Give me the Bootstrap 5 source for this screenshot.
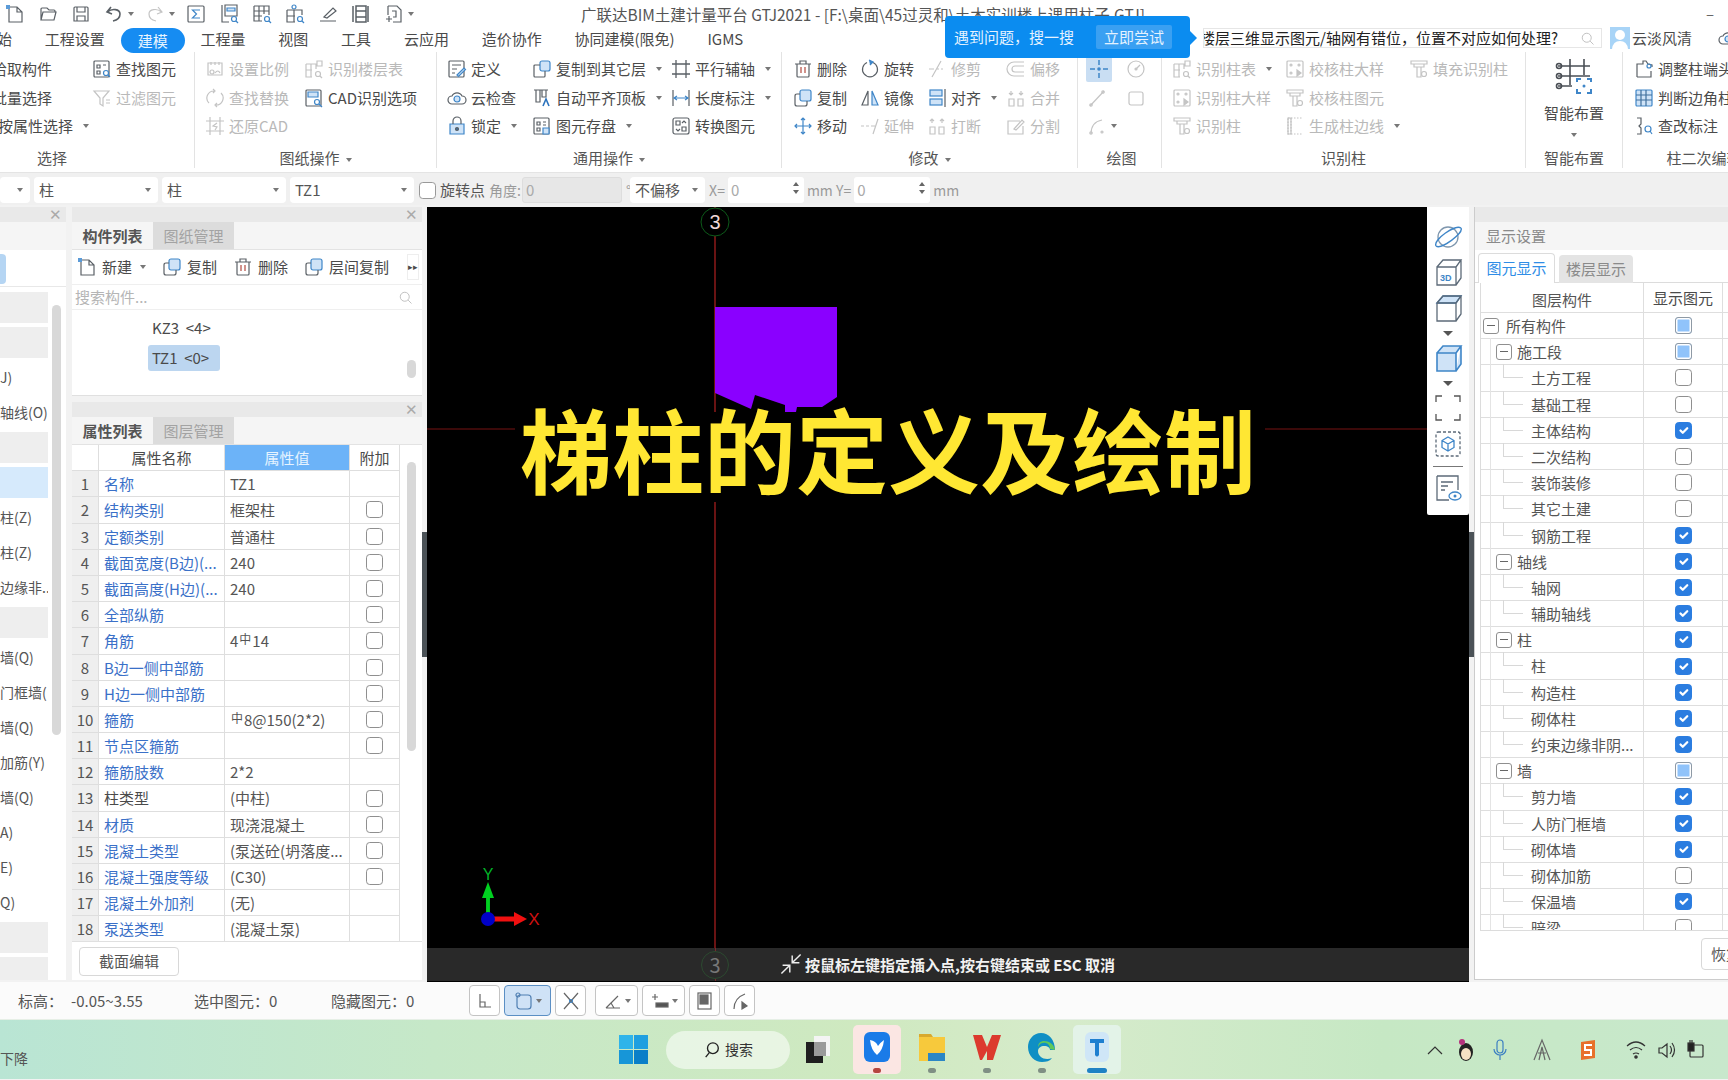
<!DOCTYPE html>
<html lang="zh">
<head>
  <meta charset="UTF-8">
  <title>广联达BIM土建计量平台 GTJ2021</title>
  <link href="https://cdn.jsdelivr.net/npm/bootstrap@5.3.0/dist/css/bootstrap.min.css" rel="stylesheet">
  <script src="https://cdn.jsdelivr.net/npm/bootstrap@5.3.0/dist/js/bootstrap.bundle.min.js"></script>
  <style>
    html, body { height: 1080px; overflow: hidden; }
    body { background: #f2f2f2; color: #4a4a4a; font: 15px/1.2 "Noto Sans CJK SC", "Noto Sans", sans-serif; }
    .app { width: 1728px; height: 1080px; overflow: hidden; position: relative; }
    .ic { width: 20px; height: 20px; flex: none; fill: none; stroke: currentColor; stroke-width: 1.2; color: #5a6066; }
    .ac { fill: var(--ac, #cfe3f7); stroke: var(--acs, #3f86c8); }
    .off { --ac: #f4f4f4; --acs: #cfcfcf; color: #b9b9b9; }
    .off .ic { color: #c4c4c4; }
    .cr { display: inline-block; width: 0; height: 0; border: 3px solid transparent; border-top: 4px solid #777; border-bottom: 0; flex: none; }

    /* title row */
    .qat { height: 28px; background: #fff; padding-left: 5px; }
    .qat .ic { margin-right: 13px; }
    .qat .cr { margin: 0 11px 0 -9px; }
    .app-title { margin-left: 156px; color: #555; white-space: nowrap; font-size: 15.5px; }
    .win-min { margin-left: auto; margin-right: 14px; color: #666; }
    .hint-pop { position: absolute; left: 945px; top: 16px; width: 245px; height: 42px; background: #0b8cf0; color: #e4f2ff; border-radius: 4px; padding: 0 18px 0 9px; z-index: 5; }
    .hint-pop::after { content: ""; position: absolute; right: -7px; top: 15px; border: 7px solid transparent; border-left-color: #0b8cf0; border-right: 0; }
    .hint-try { background: #3aa0f2; padding: 3px 8px; border-radius: 2px; }

    /* ribbon tabs */
    .tab-row { height: 24px; background: #fff; position: relative; }
    .rb-tabs { margin-left: -3px; flex-wrap: nowrap; gap: 32.8px; }
    .rb-tabs .nav-link { padding: 0; color: #4a4a4a; line-height: 22px; white-space: nowrap; border-radius: 13px; }
    .rb-tabs .nav-link.active { background: #168cf2; color: #e8f4ff; padding: 0 17px; margin: 0 -17px; height: 25px; line-height: 25px; }
    .ask-box { position: absolute; left: 1203px; top: 0; width: 399px; height: 20px; background: #fff; border: 1px solid #e6e6e6; color: #222; overflow: hidden; white-space: nowrap; text-indent: -4px; line-height: 18px; }
    .ask-icon { position: absolute; right: 6px; top: 2px; width: 15px; height: 15px; color: #bbb; }
    .user-box { position: absolute; left: 1610px; top: -2px; height: 24px; white-space: nowrap; gap: 2px; overflow: hidden; width: 118px; }
    .avatar { width: 20px; height: 22px; background: #a8d4f7; flex: none; }

    /* ribbon */
    .ribbon { height: 121px; background: #fff; border-bottom: 1px solid #e4e4e4; overflow: hidden; }
    .rb-group { flex: none; border-right: 1px solid #e3e3e3; height: 116px; }
    .rb-body { height: 85px; padding-top: 3px; }
    .rb-label { height: 31px; padding-top: 7px; line-height: 28px; text-align: center; color: #555; white-space: nowrap; }
    .rb-label .cr { margin-left: 6px; vertical-align: middle; }
    .rb-col { flex: none; }
    .rb-item { height: 28.5px; display: flex; align-items: center; gap: 4px; white-space: nowrap; }
    .rb-item .cr { margin-left: 6px; }
    .g1 { width: 195px; } .g1 .rb-body { margin-left: -8px; }
    .g1 .rb-label { width: 104px; }
    .g1 .rb-shift { margin-left: 6px; }
    .g2 { width: 242px; } .g2 .rb-body { padding-left: 10px; }
    .g3 { width: 345px; } .g3 .rb-body { padding-left: 10px; }
    .g4 { width: 296px; } .g4 .rb-body { padding-left: 11px; }
    .g5 { width: 84px; }  .g5 .rb-body { padding-left: 9px; }
    .g5 .rb-label { padding-left: 4px; }
    .g6 { width: 364px; } .g6 .rb-body { padding-left: 10px; }
    .g7 { width: 97px; }
    .g8 { width: 162px; border-right: 0; } .g8 .rb-body { padding-left: 11px; }
    .cw-39 { width: 39px; } .cw-67 { width: 67px; } .cw-79 { width: 79px; } .cw-85 { width: 85px; }
    .cw-100 { width: 100px; } .cw-99 { width: 99px; } .cw-113 { width: 113px; } .cw-124 { width: 124px; } .cw-139 { width: 139px; }
    .draw-on { width: 26px; height: 26px; margin-left: -1px; background: #c9def3; border-radius: 2px; display: flex; align-items: center; justify-content: center; }
    .big-tool { text-align: center; padding-top: 5px; }
    .big-tool svg { width: 40px; height: 42px; fill: none; stroke: #4a4f55; stroke-width: 1.6; display: block; margin: 0 auto 5px; }

    /* attribute bar */
    .attr-bar { height: 32px; padding-top: 2px; background: #f0f0f0; gap: 4px; color: #555; white-space: nowrap; }
    .sel-box { height: 26px; background: #fff; border-radius: 4px; padding: 0 7px 0 5px; display: flex; align-items: center; justify-content: space-between; flex: none; }
    .sel-first { width: 30px; justify-content: flex-end; }
    .sel-wide { width: 124px; }
    .sel-off { width: 75px; }
    .attr-check { width: 17px; height: 17px; margin: 0 0 0 1px; border-radius: 3px; border-color: #999; flex: none; }
    .attr-dim { color: #9a9a9a; font-size: 14px; }
    .ang-lbl { margin-right: -3px; }
    .deg-mark { margin-right: -5px; }
    .attr-tail { gap: 3px; }
    .angle-box { width: 100px; height: 26px; background: #e7e7e7; border: 1px solid #ddd; color: #aaa; border-radius: 3px; padding: 0 3px; line-height: 24px; }
    .num-box { width: 76px; height: 26px; background: #fff; border-radius: 3px; padding: 0 3px; color: #aaa; line-height: 26px; position: relative; }
    .spin { position: absolute; right: 5px; top: 5px; display: flex; flex-direction: column; gap: 4px; }
    .spin i { display: block; border: 3px solid transparent; border-bottom: 4px solid #666; border-top: 0; }
    .spin i + i { border-top: 4px solid #666; border-bottom: 0; }

    /* main area */
    .main-area { height: 777px; padding-top: 2px; }
    .side-pane { height: 773px; background: #fff; flex: none; }
    .pane-strip { height: 15px; background: #e9e9e9; position: relative; flex: none; }
    .pane-x { position: absolute; right: 4px; top: 0; font-size: 15px; line-height: 14px; color: #aaa; }
    .nav-pane { width: 66px; margin-right: 6px; position: relative; overflow: hidden; }
    .nav-head { height: 28px; background: #f5f5f5; flex: none; }
    .nav-sel { width: 6px; height: 30px; margin-top: 4px; background: #b5d5f3; border-radius: 0 4px 4px 0; flex: none; }
    .nav-rule { border-top: 1px solid #e8e8e8; margin: 2px 0 5px; flex: none; }
    #nav-rows { flex: none; }
    .nav-row { width: 48px; height: 31px; margin-bottom: 4px; line-height: 31px; overflow: hidden; white-space: nowrap; color: #555; font-size: 14px; }
    .nav-grey { background: #eeeeee; }
    .nav-blue { background: #d6eafc; }
    .nav-thumb { position: absolute; left: 52px; top: 98px; width: 9px; height: 430px; background: #d8d8d8; border-radius: 5px; }

    .comp-pane { width: 350px; }
    .comp-list { height: 189px; border-bottom: 1px solid #e0e0e0; position: relative; }
    .gap-strip { height: 6px; background: #f2f2f2; }
    .tab-strip { height: 28px; background: #f5f5f5; border-bottom: 1px solid #e3e3e3; }
    .tab-on { width: 81px; text-align: center; line-height: 27px; font-weight: 700; color: #555; }
    .tab-dim { width: 81px; text-align: center; line-height: 27px; background: #dcdcdc; color: #a3a3a3; }
    .comp-tools { height: 35px; padding-left: 5px; border-bottom: 1px solid #efefef; position: relative; white-space: nowrap; }
    .comp-tool { display: flex; align-items: center; gap: 5px; }
    .comp-more { position: absolute; right: 3px; top: 4px; width: 12px; height: 26px; border: 1px solid #eee; font-size: 9px; line-height: 24px; text-align: center; }
    .comp-search { height: 25px; padding: 0 3px; border-bottom: 1px solid #efefef; color: #b5b5b5; }
    .comp-search svg { width: 15px; height: 15px; color: #bbb; margin-right: 6px; }
    .comp-item { position: absolute; left: 76px; padding: 0 4px; height: 26px; line-height: 26px; white-space: pre; }
    .comp-item-a { top: 108px; }
    .comp-item-b { top: 138px; width: 72px; background: #bcd6f0; border-radius: 3px; }
    .list-thumb { position: absolute; left: 335px; top: 153px; width: 9px; height: 18px; background: #d8d8d8; border-radius: 5px; }

    .prop-wrap { height: 497px; overflow: hidden; position: relative; border-bottom: 1px solid #e0e0e0; }
    .prop-row { display: flex; height: 26.2px; line-height: 25px; }
    .prop-row > div { border-right: 1px solid #dedede; border-bottom: 1px solid #dedede; overflow: hidden; white-space: nowrap; }
    .p-no { width: 27px; background: #efefef; text-align: center; color: #555; flex: none; }
    .p-name { width: 126px; padding-left: 5px; color: #3a70c8; flex: none; text-overflow: ellipsis; }
    .p-plain { color: #4a4a4a; }
    .p-val { width: 125px; padding-left: 5px; flex: none; color: #555; }
    .p-add { width: 50px; flex: none; display: flex; align-items: center; justify-content: center; }
    .p-head .p-no { background: #fff; }
    .p-head .p-name { text-align: center; color: #4a4a4a; padding: 0; }
    .p-head .p-val { text-align: center; background: #6cb3f8; color: #e6f3ff; padding: 0; }
    .chk { width: 17px; height: 17px; margin: 0; border-radius: 3px; border-color: #8f8f8f; flex: none; }
    .chk:checked { background-color: #2b7de0; border-color: #2b7de0; }
    .chk-part { display: block; width: 17px; height: 17px; border: 1px solid #8f9aa5; border-radius: 3px; background: #90c3fa; box-shadow: inset 0 0 0 1.5px #fff; }
    .reb { font-size: 12px; position: relative; top: -3px; margin: 0 1px; }
    .prop-thumb { position: absolute; left: 335px; top: 17px; width: 9px; height: 289px; background: #d8d8d8; border-radius: 5px; }
    .pane-foot { padding: 5px 0 0 7px; }
    .foot-btn { width: 100px; height: 29px; padding: 0; font-size: 15px; color: #555; background: #fff; border: 1px solid #d8d8d8; border-radius: 4px; }

    .handle { width: 5px; height: 775px; flex: none; background: #f2f2f2; position: relative; }
    .handle::after { content: ""; position: absolute; left: 0; top: 325px; width: 5px; height: 125px; background: #4b5257; }

    /* drawing canvas */
    .draw-area { width: 1042px; height: 775px; background: #000; position: relative; flex: none; overflow: hidden; }
    .draw-area > svg { position: absolute; left: 0; top: 0; }
    .big-caption { position: absolute; left: 93px; top: 194px; font-size: 92px; line-height: 1; font-weight: 700; color: #ffe733; white-space: nowrap; -webkit-text-stroke: 7px #000; paint-order: stroke fill; }
    .view-tools { position: absolute; right: 0; top: 0; width: 42px; height: 308px; background: #fff; border-radius: 0 0 2px 2px; padding-top: 15px; color: #5b6b7b; }
    .view-tools svg { display: block; width: 30px; height: 30px; fill: none; stroke: #5c6a78; stroke-width: 1.3; margin: 0 auto; }
    .view-tools .cr { display: block; margin: 8px auto 0; border-width: 5px 5px 0; border-top-color: #555; }
    .view-tools .vt-m5 { margin-top: 5px; }
    .view-tools .vt-m6 { margin-top: 6px; }
    .view-tools .vt-m7 { margin-top: 7px; }
    .vt-rule { border-top: 1px solid #777; margin: 7px 6px 0; }
    .cmd-bar { position: absolute; left: 0; bottom: 1px; width: 100%; height: 33px; background: rgba(42,42,42,.97); color: #f2f2f2; font-weight: 700; line-height: 33px; }
    .cmd-line { position: absolute; left: 288px; top: 0; bottom: 0; width: 1px; background: #7a2a2a; }
    .cmd-ring { position: absolute; left: 274px; top: 3px; width: 28px; height: 28px; border: 1px solid #2c4a30; border-radius: 50%; text-align: center; font-weight: 400; color: #777; font-size: 20px; line-height: 26px; background: #2a2a2a; }
    .cmd-text { position: absolute; left: 378px; top: 0; white-space: nowrap; }
    .cmd-ico { position: absolute; left: 352px; top: 4px; width: 24px; height: 24px; stroke: #eee; fill: none; stroke-width: 1.2; }

    /* right pane */
    .disp-pane { width: 254px; border-left: 1px solid #ccc; overflow: hidden; border-bottom: 1px solid #ccc; }
    .disp-title { height: 28px; background: #f5f5f5; color: #8a8a8a; line-height: 28px; padding-left: 11px; }
    .disp-tabs { height: 33px; padding: 3px 0 0 3px; gap: 4px; border-bottom: 1px solid #dcdcdc; }
    .disp-tab { width: 77px; height: 30px; line-height: 28px; text-align: center; background: #fff; color: #2f8de6; border: 1px solid #dcdcdc; border-bottom: 0; border-radius: 4px 4px 0 0; }
    .disp-tab-b { width: 74px; height: 28px; margin-top: 2px; line-height: 27px; text-align: center; background: #e4e4e4; color: #8a8a8a; border-radius: 4px 4px 0 0; }
    .disp-grid { height: 648px; margin-left: 5px; overflow: hidden; border-bottom: 1px solid #dcdcdc; border-left: 1px solid #dcdcdc; }
    .t-row { display: flex; height: 26.2px; line-height: 25px; border-bottom: 1px solid #dedede; }
    .t-head { height: 30px; line-height: 33px; text-align: center; }
    .t-name { width: 163px; flex: none; border-right: 1px solid #dedede; position: relative; white-space: nowrap; color: #555; }
    .t-show { width: 79px; flex: none; border-right: 1px solid #dedede; display: flex; align-items: center; justify-content: center; }
    .t-l0 { padding-left: 25px; }
    .t-l1 { padding-left: 36px; }
    .t-l2 { padding-left: 50px; }
    .t-btn { position: absolute; top: 5px; width: 16px; height: 16px; border: 1px solid #8f8f8f; border-radius: 3px; background: #fff; }
    .t-btn::after { content: ""; position: absolute; left: 3px; top: 6px; width: 8px; border-top: 1px solid #666; }
    .t-l0 .t-btn { left: 2px; }
    .t-l1 .t-btn { left: 15px; }
    .t-l1::before, .t-l2::before { content: ""; position: absolute; left: 9px; top: -1px; bottom: -1px; border-left: 1px solid #e4e4e4; }
    .t-l2::after { content: ""; position: absolute; left: 22px; top: -1px; height: 14px; width: 20px; border-left: 1px solid #d8d8d8; border-bottom: 1px solid #d8d8d8; }
    .disp-foot { height: 47px; padding: 7px 0 0 226px; }
    .restore-btn { width: 50px; height: 32px; padding: 0 0 0 9px; text-align: left; white-space: nowrap; overflow: hidden; font-size: 15px; color: #555; background: #fff; border: 1px solid #d8d8d8; border-radius: 4px; }

    /* status bar */
    .status-bar { height: 38px; background: #fbfbfb; color: #555; white-space: nowrap; border-bottom: 1px solid #e6efe6; }
    .st-a { width: 176px; margin-left: 18px; }
    .st-b { width: 137px; }
    .st-c { width: 138px; }
    .st-val { margin-left: 8px; }
    .snap { height: 31px; width: 31px; border: 1px solid #c4c4c4; border-radius: 4px; background: #fff; display: flex; align-items: center; justify-content: center; gap: 2px; margin-right: 4px; }
    .snap-w { width: 43px; }
    .snap-on { width: 47px; background: #cfe2f6; border-color: #5b8fc4; }
    .snap svg { width: 20px; height: 20px; fill: none; stroke: #666; stroke-width: 1.2; flex: none; }
    .snap-on svg { stroke: #4f7fb2; }
    .snap-gap { margin-right: 9px; }

    /* taskbar */
    .task-bar { height: 59px; background: linear-gradient(90deg, #b9e5d4 0%, #c6e8c8 25%, #cfe9c0 50%, #d6ebcb 62%, #c6e8c4 80%, #c8e8cc 100%); position: relative; }
    .task-left { width: 619px; height: 100%; padding-top: 30px; color: #555; font-size: 14px; flex: none; overflow: hidden; }
    .win-logo { width: 29px; height: 29px; flex: none; margin-right: 18px; }
    .task-search { width: 124px; height: 38px; border-radius: 19px; background: rgba(255,255,255,.55); gap: 4px; color: #333; font-size: 14px; margin-right: 16px; flex: none; }
    .task-search svg { width: 18px; height: 18px; fill: none; stroke: #222; stroke-width: 1.5; }
    .task-view { width: 24px; height: 27px; margin-right: 23px; flex: none; }
    .tile { width: 48px; height: 49px; margin-right: 7px; border-radius: 5px; flex: none; position: relative; padding-top: 6px; }
    .tile svg { width: 32px; height: 32px; display: block; margin: 0 auto; }
    .tile-pink { background: #fbe6e3; }
    .tile-soft { background: #e3f3e8; }
    .tile-dot { position: absolute; left: 20px; bottom: 1px; width: 8px; height: 5px; border-radius: 3px; background: #7f8f84; }
    .tile-dot-red { background: #b5453f; }
    .tile-dot-blue { left: 14px; width: 20px; background: #1f82c4; }
    .tray { margin-left: 297px; }
    .tray svg { width: 20px; height: 24px; fill: none; stroke: #333; stroke-width: 1.2; flex: none; }
    .tr-a { margin-right: 11px; } .tr-b { margin-right: 14px; } .tr-c { margin-right: 22px; } .tr-d { margin-right: 26px; } .tr-e { margin-right: 28px; } .tr-f { margin-right: 10px; } .tr-g { margin-right: 10px; }
  </style>
</head>
<body>
<!-- shared icons -->
<svg width="0" height="0" class="position-absolute">
  <symbol id="i-new" viewBox="0 0 20 20"><path d="M4 3h8l5 5v10H4z M12 3v5h5"/><rect x="1" y="1" width="4" height="4" fill="#5b9bd8" stroke="none"/></symbol>
  <symbol id="i-open" viewBox="0 0 20 20"><path d="M3 16V5q0-1 1-1h5l2 2h5q1 0 1 1v1 M3 16l2-8h13l-2 8z"/></symbol>
  <symbol id="i-save" viewBox="0 0 20 20"><path d="M3 4q0-1 1-1h12q1 0 1 1v13H3z M6 3v5h8V3 M6 17v-5h8v5"/></symbol>
  <symbol id="i-undo" viewBox="0 0 20 20"><path d="M7 3L3 8l5 2 M3.5 8C8 4 16 5 16 10c0 3-2 6-7 7" stroke-width="1.6"/></symbol>
  <symbol id="i-redo" viewBox="0 0 20 20"><path d="M13 3l4 5-5 2 M16.500 8C12 4 4 5 4 10c0 3 2 6 7 7"/></symbol>
  <symbol id="i-sum" viewBox="0 0 20 20"><rect x="2" y="2" width="16" height="16" rx="1"/><path d="M14 6H6.500l4 4-4 4H14" stroke="#3f86c8"/></symbol>
  <symbol id="i-planq" viewBox="0 0 20 20"><path d="M3 1v17h7 M6 1h12v11H6z"/><path class="ac" d="M8 4h8v3H8z"/><circle cx="15" cy="15" r="2.500" stroke="#3f86c8"/><path d="M17 17l2 2" stroke="#3f86c8"/></symbol>
  <symbol id="i-gridq" viewBox="0 0 20 20"><path d="M2 2h15v9 M2 2v15h8 M2 7h15 M7 2v15 M12 2v8 M2 12h8"/><circle cx="15" cy="15" r="2.500" stroke="#3f86c8"/><path d="M17 17l2 2" stroke="#3f86c8"/></symbol>
  <symbol id="i-netq" viewBox="0 0 20 20"><circle cx="9" cy="3" r="2" stroke="#3f86c8"/><path d="M2 6h15v5 M2 6v12h8 M2 12h8 M9 6v12"/><circle cx="15" cy="15" r="2.500" stroke="#3f86c8"/><path d="M17 17l2 2" stroke="#3f86c8"/></symbol>
  <symbol id="i-pen" viewBox="0 0 20 20"><path d="M2 17h16 M6 13l9-9 3 3-9 7z"/></symbol>
  <symbol id="i-col" viewBox="0 0 20 20"><path d="M2 2v16 M17 2v16 M5 2h10v16H5z M5 7h10 M5 13h10" stroke-width="1.5"/></symbol>
  <symbol id="i-addf" viewBox="0 0 20 20"><path d="M4 2h9l4 4v12H9 M4 2v9 M2 15h6 M5 12v6 M8 7h4v6h-3"/></symbol>
  <symbol id="i-find" viewBox="0 0 20 20"><rect x="2" y="2" width="15" height="16" rx="1"/><path d="M5 6h3v3H5z M5 12h3v3H5z M11 6h3"/><circle cx="14" cy="14" r="2.500" stroke="#3f86c8"/><path d="M16 16l2 2" stroke="#3f86c8"/></symbol>
  <symbol id="i-filter" viewBox="0 0 20 20"><path d="M2 3h15l-6 7v8l-3-2v-6z M14 12h4 M14 15h4"/></symbol>
  <symbol id="i-ratio" viewBox="0 0 20 20"><path d="M3 4h14v12H3z M6 3v3 M10 3v3 M14 3v3"/><circle cx="7" cy="13" r="2"/><path d="M10 14q3-4 5 0"/></symbol>
  <symbol id="i-floors" viewBox="0 0 20 20"><path d="M2 5h10v5 M2 5v13h6 M2 11h6 M7 5v13 M13 2h5v5h-5z"/><circle cx="14" cy="15" r="2.500"/><path d="M16 17l2 2"/></symbol>
  <symbol id="i-swap" viewBox="0 0 20 20"><path d="M4 15A7 7 0 0 1 9 3 M16 5a7 7 0 0 1-5 12 M8 1l2 2-2 2 M12 15l-2 2 2 2"/></symbol>
  <symbol id="i-cad" viewBox="0 0 20 20"><rect x="2" y="2" width="15" height="16" rx="1"/><path class="ac" d="M4 4h10v5H4z"/><circle cx="13" cy="14" r="2.500" stroke="#3f86c8"/><path d="M15 16l3 3" stroke="#3f86c8"/></symbol>
  <symbol id="i-restore" viewBox="0 0 20 20"><path d="M5 1v18 M15 1v18 M1 5h18 M1 15h18 M12 7l-4 3 4 1-2 3"/></symbol>
  <symbol id="i-def" viewBox="0 0 20 20"><rect x="2" y="2" width="15" height="16" rx="1"/><path d="M5 6h9 M5 10h5 M5 14h3"/><path d="M10 16l7-7 1.500 1.500-7 7z" stroke="#3f86c8" fill="#cfe3f7"/></symbol>
  <symbol id="i-cloud" viewBox="0 0 20 20"><path d="M5 16a4 4 0 0 1 0-8 5.500 5.500 0 0 1 10 0 4 4 0 0 1 0 8z"/><circle class="ac" cx="10" cy="11" r="3"/></symbol>
  <symbol id="i-lock" viewBox="0 0 20 20"><path class="ac" d="M3 8h14v10H3z"/><path d="M6 8V5a4 4 0 0 1 8 0v3"/><circle cx="10" cy="13" r="1.500" fill="#3f6f9c"/></symbol>
  <symbol id="i-copy2" viewBox="0 0 20 20"><rect class="ac" x="8" y="2" width="10" height="10" rx="2"/><path d="M8 6H3q-1 0-1 1v10q0 1 1 1h9q1 0 1-1v-5"/></symbol>
  <symbol id="i-top" viewBox="0 0 20 20"><path d="M2 2h14 M4 2v12h4V2 M10 2v7h4V2"/><path d="M11 18l3-7 3 7" stroke="#2c73bd" stroke-width="1.600"/></symbol>
  <symbol id="i-store" viewBox="0 0 20 20"><rect x="2" y="2" width="15" height="16" rx="1"/><path d="M5 6h3v3H5z M5 12h3v3H5z M11 6h3 M11 9h3"/><path class="ac" d="M11 12h6v6h-6z"/></symbol>
  <symbol id="i-par" viewBox="0 0 20 20"><path d="M5 1v18 M15 1v18 M1 5h18 M1 15h18" stroke-width="1.3"/></symbol>
  <symbol id="i-dim" viewBox="0 0 20 20"><path d="M2 2v16 M18 2v16"/><path d="M3 10h14 M6 8l-3 2 3 2 M14 8l3 2-3 2" stroke="#3f86c8"/></symbol>
  <symbol id="i-conv" viewBox="0 0 20 20"><rect x="2" y="2" width="16" height="16" rx="2"/><path d="M5 5h4v4H5z M11 11h4v4h-4z M11 7l2-2 2 2 M9 13l-2 2-2-2"/></symbol>
  <symbol id="i-del" viewBox="0 0 20 20"><path d="M4 5h12v12q0 1-1 1H5q-1 0-1-1z M7 5V2h6v3 M2 5h16"/><path d="M8 8v6 M12 8v6" stroke="#b34a3f"/></symbol>
  <symbol id="i-rot" viewBox="0 0 20 20"><path d="M13 3.500A7.500 7.500 0 1 1 7 3.500"/><path d="M9 1l4 2-3 3" stroke="#3f86c8" fill="#3f86c8"/></symbol>
  <symbol id="i-trim" viewBox="0 0 20 20"><path d="M5 18L14 2 M2 10h5 M10 10h2 M14 10h2"/></symbol>
  <symbol id="i-off" viewBox="0 0 20 20"><path d="M18 3H8a6 6 0 0 0 0 14h10 M18 7H9a3 3 0 0 0 0 6h9"/></symbol>
  <symbol id="i-copy" viewBox="0 0 20 20"><rect class="ac" x="7" y="2" width="11" height="11" rx="2"/><path d="M7 6H4q-2 0-2 2v8q0 2 2 2h8q2 0 2-2v-3"/></symbol>
  <symbol id="i-mirror" viewBox="0 0 20 20"><path d="M8 3L2 17h6z"/><path class="ac" d="M12 3l6 14h-6z"/></symbol>
  <symbol id="i-align" viewBox="0 0 20 20"><rect class="ac" x="3" y="2" width="12" height="6"/><rect class="ac" x="3" y="11" width="12" height="6"/><path d="M18 1v18"/></symbol>
  <symbol id="i-merge" viewBox="0 0 20 20"><path d="M3 11h5v7H3z M12 11h5v7h-5z M5 3v4 M3 5l2 2 2-2 M15 3v4 M13 5l2 2 2-2"/></symbol>
  <symbol id="i-move" viewBox="0 0 20 20"><path d="M10 2v16 M2 10h16 M8 4l2-2 2 2 M8 16l2 2 2-2 M4 8l-2 2 2 2 M16 8l2 2-2 2" stroke="#3f86c8"/></symbol>
  <symbol id="i-ext" viewBox="0 0 20 20"><path d="M1 10h3 M6 10h3 M11 10h4 M13 18L18 3"/></symbol>
  <symbol id="i-break" viewBox="0 0 20 20"><path d="M3 11h5v7H3z M12 11h5v7h-5z M5 7V3 M3 5l2-2 2 2 M15 7V3 M13 5l2-2 2 2"/></symbol>
  <symbol id="i-split" viewBox="0 0 20 20"><path d="M14 5H2v13h15v-8 M8 13l8-9 2 2-8 8z"/></symbol>
  <symbol id="i-snap" viewBox="0 0 20 20"><path d="M10 1v5 M10 14v5 M1 10h5 M14 10h5" stroke="#3f86c8" stroke-width="1.500"/><circle cx="10" cy="10" r="1.800" fill="#3f86c8" stroke="none"/></symbol>
  <symbol id="i-clock" viewBox="0 0 20 20"><circle cx="10" cy="10" r="8"/><path d="M10 10l4-4"/><circle cx="10" cy="10" r="1" fill="currentColor"/></symbol>
  <symbol id="i-line" viewBox="0 0 20 20"><path d="M3 18L17 3"/><circle cx="4" cy="17" r="1.200"/><circle cx="16" cy="4" r="1.200"/></symbol>
  <symbol id="i-rect" viewBox="0 0 20 20"><rect x="3" y="4" width="14" height="13" rx="2"/></symbol>
  <symbol id="i-arc" viewBox="0 0 20 20"><path d="M4 18Q4 6 15 4"/><circle cx="4" cy="17" r="1.200"/><circle cx="15" cy="16" r="1"/></symbol>
  <symbol id="i-frame" viewBox="0 0 20 20"><rect x="2" y="2" width="16" height="16" rx="1"/><circle cx="6" cy="6" r="1"/><circle cx="14" cy="6" r="1"/><circle cx="6" cy="14" r="1"/><path d="M12 11l4 3-4 3z" fill="currentColor"/></symbol>
  <symbol id="i-tcol" viewBox="0 0 20 20"><path d="M2 2h16v3H2z M5 5h10v3H5z M8 8h4v10H8z"/><circle cx="15" cy="15" r="2.500"/></symbol>
  <symbol id="i-edge" viewBox="0 0 20 20"><path d="M3 2h3v16H3z M6 2h12 M6 18h12" stroke-dasharray="1.500 1.500"/><path d="M3 2h3v16H3z"/></symbol>
  <symbol id="i-adj" viewBox="0 0 20 20"><path d="M3 18V5h6V2h3l2 3 4 1v2 M3 18h14v-6"/><circle cx="15" cy="7" r="2" stroke="#3f86c8"/></symbol>
  <symbol id="i-table" viewBox="0 0 20 20"><rect class="ac" x="2" y="2" width="16" height="16" rx="1"/><path d="M2 7h16 M2 12h16 M7 2v16 M12 2v16" stroke="#3f6f9c"/></symbol>
  <symbol id="i-mark" viewBox="0 0 20 20"><path d="M3 2h4v6l-2 2 2 2v6H3"/><circle cx="14" cy="13" r="3" stroke="#3f86c8"/><path d="M16 15l2 3" stroke="#3f86c8"/></symbol>
  <symbol id="i-mag" viewBox="0 0 20 20"><circle cx="9" cy="9" r="6"/><path d="M13.500 13.500L18 18"/></symbol>
  <symbol id="i-cube" viewBox="0 0 30 30"><path d="M4 10h19v18H4z M4 10l6-7h18l-5 7 M23 28l5-7V3"/></symbol>
</svg>

<div class="app d-flex flex-column">
  <!-- title row -->
  <div class="qat d-flex align-items-center">
    <svg class="ic"><use href="#i-new"/></svg>
    <svg class="ic"><use href="#i-open"/></svg>
    <svg class="ic"><use href="#i-save"/></svg>
    <svg class="ic"><use href="#i-undo"/></svg><span class="cr"></span>
    <span class="off d-flex align-items-center"><svg class="ic"><use href="#i-redo"/></svg><span class="cr"></span></span>
    <svg class="ic"><use href="#i-sum"/></svg>
    <svg class="ic"><use href="#i-planq"/></svg>
    <svg class="ic"><use href="#i-gridq"/></svg>
    <svg class="ic"><use href="#i-netq"/></svg>
    <svg class="ic"><use href="#i-pen"/></svg>
    <svg class="ic"><use href="#i-col"/></svg>
    <svg class="ic"><use href="#i-addf"/></svg>
    <span class="cr"></span>
    <span class="app-title">广联达BIM土建计量平台 GTJ2021 - [F:\桌面\45过灵和\土木实训楼上课用柱子.GTJ]</span>
    <span class="win-min">–</span>
  </div>
  <div class="hint-pop d-flex align-items-center justify-content-between"><span>遇到问题，搜一搜</span><span class="hint-try">立即尝试</span></div>

  <!-- ribbon tabs -->
  <div class="tab-row d-flex align-items-center">
    <ul class="nav nav-pills rb-tabs">
      <li class="nav-item"><a class="nav-link" href="#">始</a></li>
      <li class="nav-item"><a class="nav-link" href="#">工程设置</a></li>
      <li class="nav-item"><a class="nav-link active" href="#">建模</a></li>
      <li class="nav-item"><a class="nav-link" href="#">工程量</a></li>
      <li class="nav-item"><a class="nav-link" href="#">视图</a></li>
      <li class="nav-item"><a class="nav-link" href="#">工具</a></li>
      <li class="nav-item"><a class="nav-link" href="#">云应用</a></li>
      <li class="nav-item"><a class="nav-link" href="#">造价协作</a></li>
      <li class="nav-item"><a class="nav-link" href="#">协同建模(限免)</a></li>
      <li class="nav-item"><a class="nav-link" href="#">IGMS</a></li>
    </ul>
    <div class="ask-box">楼层三维显示图元/轴网有错位，位置不对应如何处理?<svg class="ask-icon ic"><use href="#i-mag"/></svg></div>
    <div class="user-box d-flex align-items-center">
      <svg class="avatar" viewBox="0 0 20 22"><circle cx="10" cy="8" r="5" fill="#fff"/><path d="M2 22q1-8 8-8t8 8z" fill="#fff"/></svg>
      <span>云淡风清</span>
      <svg class="ic ms-4"><use href="#i-cloud"/></svg>
    </div>
  </div>

  <!-- ribbon -->
  <div class="ribbon d-flex">
    <div class="rb-group g1 d-flex flex-column">
      <div class="rb-body d-flex">
        <div class="rb-col cw-100">
          <div class="rb-item">拾取构件</div>
          <div class="rb-item">批量选择</div>
          <div class="rb-item rb-shift">按属性选择<span class="cr"></span></div>
        </div>
        <div class="rb-col">
          <div class="rb-item"><svg class="ic"><use href="#i-find"/></svg>查找图元</div>
          <div class="rb-item off"><svg class="ic"><use href="#i-filter"/></svg>过滤图元</div>
        </div>
      </div>
      <div class="rb-label">选择</div>
    </div>
    <div class="rb-group g2 d-flex flex-column">
      <div class="rb-body d-flex">
        <div class="rb-col cw-99 off">
          <div class="rb-item"><svg class="ic"><use href="#i-ratio"/></svg>设置比例</div>
          <div class="rb-item"><svg class="ic"><use href="#i-swap"/></svg>查找替换</div>
          <div class="rb-item"><svg class="ic"><use href="#i-restore"/></svg>还原CAD</div>
        </div>
        <div class="rb-col">
          <div class="rb-item off"><svg class="ic"><use href="#i-floors"/></svg>识别楼层表</div>
          <div class="rb-item"><svg class="ic"><use href="#i-cad"/></svg>CAD识别选项</div>
        </div>
      </div>
      <div class="rb-label">图纸操作<span class="cr"></span></div>
    </div>
    <div class="rb-group g3 d-flex flex-column">
      <div class="rb-body d-flex">
        <div class="rb-col cw-85">
          <div class="rb-item"><svg class="ic"><use href="#i-def"/></svg>定义</div>
          <div class="rb-item"><svg class="ic"><use href="#i-cloud"/></svg>云检查</div>
          <div class="rb-item"><svg class="ic"><use href="#i-lock"/></svg>锁定<span class="cr"></span></div>
        </div>
        <div class="rb-col cw-139">
          <div class="rb-item"><svg class="ic"><use href="#i-copy2"/></svg>复制到其它层<span class="cr"></span></div>
          <div class="rb-item"><svg class="ic"><use href="#i-top"/></svg>自动平齐顶板<span class="cr"></span></div>
          <div class="rb-item"><svg class="ic"><use href="#i-store"/></svg>图元存盘<span class="cr"></span></div>
        </div>
        <div class="rb-col">
          <div class="rb-item"><svg class="ic"><use href="#i-par"/></svg>平行辅轴<span class="cr"></span></div>
          <div class="rb-item"><svg class="ic"><use href="#i-dim"/></svg>长度标注<span class="cr"></span></div>
          <div class="rb-item"><svg class="ic"><use href="#i-conv"/></svg>转换图元</div>
        </div>
      </div>
      <div class="rb-label">通用操作<span class="cr"></span></div>
    </div>
    <div class="rb-group g4 d-flex flex-column">
      <div class="rb-body d-flex">
        <div class="rb-col cw-67">
          <div class="rb-item"><svg class="ic"><use href="#i-del"/></svg>删除</div>
          <div class="rb-item"><svg class="ic"><use href="#i-copy"/></svg>复制</div>
          <div class="rb-item"><svg class="ic"><use href="#i-move"/></svg>移动</div>
        </div>
        <div class="rb-col cw-67">
          <div class="rb-item"><svg class="ic"><use href="#i-rot"/></svg>旋转</div>
          <div class="rb-item"><svg class="ic"><use href="#i-mirror"/></svg>镜像</div>
          <div class="rb-item off"><svg class="ic"><use href="#i-ext"/></svg>延伸</div>
        </div>
        <div class="rb-col cw-79">
          <div class="rb-item off"><svg class="ic"><use href="#i-trim"/></svg>修剪</div>
          <div class="rb-item"><svg class="ic"><use href="#i-align"/></svg>对齐<span class="cr"></span></div>
          <div class="rb-item off"><svg class="ic"><use href="#i-break"/></svg>打断</div>
        </div>
        <div class="rb-col off">
          <div class="rb-item"><svg class="ic"><use href="#i-off"/></svg>偏移</div>
          <div class="rb-item"><svg class="ic"><use href="#i-merge"/></svg>合并</div>
          <div class="rb-item"><svg class="ic"><use href="#i-split"/></svg>分割</div>
        </div>
      </div>
      <div class="rb-label">修改<span class="cr"></span></div>
    </div>
    <div class="rb-group g5 d-flex flex-column">
      <div class="rb-body d-flex">
        <div class="rb-col cw-39 off">
          <div class="rb-item"><span class="draw-on"><svg class="ic"><use href="#i-snap"/></svg></span></div>
          <div class="rb-item"><svg class="ic"><use href="#i-line"/></svg></div>
          <div class="rb-item"><svg class="ic"><use href="#i-arc"/></svg><span class="cr ms-0"></span></div>
        </div>
        <div class="rb-col off">
          <div class="rb-item"><svg class="ic"><use href="#i-clock"/></svg></div>
          <div class="rb-item"><svg class="ic"><use href="#i-rect"/></svg></div>
        </div>
      </div>
      <div class="rb-label">绘图</div>
    </div>
    <div class="rb-group g6 d-flex flex-column">
      <div class="rb-body d-flex off">
        <div class="rb-col cw-113">
          <div class="rb-item"><svg class="ic"><use href="#i-floors"/></svg>识别柱表<span class="cr"></span></div>
          <div class="rb-item"><svg class="ic"><use href="#i-frame"/></svg>识别柱大样</div>
          <div class="rb-item"><svg class="ic"><use href="#i-tcol"/></svg>识别柱</div>
        </div>
        <div class="rb-col cw-124">
          <div class="rb-item"><svg class="ic"><use href="#i-frame"/></svg>校核柱大样</div>
          <div class="rb-item"><svg class="ic"><use href="#i-tcol"/></svg>校核柱图元</div>
          <div class="rb-item"><svg class="ic"><use href="#i-edge"/></svg>生成柱边线<span class="cr"></span></div>
        </div>
        <div class="rb-col">
          <div class="rb-item"><svg class="ic"><use href="#i-tcol"/></svg>填充识别柱</div>
        </div>
      </div>
      <div class="rb-label">识别柱</div>
    </div>
    <div class="rb-group g7 d-flex flex-column">
      <div class="rb-body big-tool">
        <svg viewBox="0 0 40 42"><path d="M16 2v26 M30 2v16 M4 9h32 M4 19h32 M4 29h14"/><circle cx="5" cy="9" r="2.500"/><circle cx="5" cy="19" r="2.500"/><circle cx="5" cy="29" r="2.500"/><path d="M23 25v-3h4 M33 22h4v3 M37 32v4h-4 M27 36h-4v-4" stroke="#3f86c8" stroke-width="2"/><circle cx="30" cy="29" r="1.500" fill="#3f86c8" stroke="none"/></svg>
        智能布置
        <div><span class="cr"></span></div>
      </div>
      <div class="rb-label">智能布置</div>
    </div>
    <div class="rb-group g8 d-flex flex-column">
      <div class="rb-body">
        <div class="rb-item"><svg class="ic"><use href="#i-adj"/></svg>调整柱端头</div>
        <div class="rb-item"><svg class="ic"><use href="#i-table"/></svg>判断边角柱</div>
        <div class="rb-item"><svg class="ic"><use href="#i-mark"/></svg>查改标注<span class="cr"></span></div>
      </div>
      <div class="rb-label">柱二次编辑</div>
    </div>
  </div>

  <!-- attribute bar -->
  <div class="attr-bar d-flex align-items-center">
    <div class="sel-box sel-first"><span class="cr"></span></div>
    <div class="sel-box sel-wide"><span>柱</span><span class="cr"></span></div>
    <div class="sel-box sel-wide"><span>柱</span><span class="cr"></span></div>
    <div class="sel-box sel-wide"><span>TZ1</span><span class="cr"></span></div>
    <input class="form-check-input attr-check" type="checkbox">
    <span>旋转点</span>
    <span class="attr-dim ang-lbl">角度:</span>
    <div class="angle-box">0</div>
    <span class="attr-dim deg-mark">°</span>
    <div class="sel-box sel-off"><span>不偏移</span><span class="cr"></span></div>
    <div class="attr-tail d-flex align-items-center">
      <span class="attr-dim">X=</span>
      <div class="num-box">0<span class="spin"><i></i><i></i></span></div>
      <span class="attr-dim">mm Y=</span>
      <div class="num-box">0<span class="spin"><i></i><i></i></span></div>
      <span class="attr-dim">mm</span>
    </div>
  </div>

  <!-- main -->
  <div class="main-area d-flex">
    <div class="side-pane nav-pane d-flex flex-column">
      <div class="pane-strip"><span class="pane-x">✕</span></div>
      <div class="nav-head"></div>
      <div class="nav-sel"></div>
      <div class="nav-rule"></div>
      <div id="nav-rows"></div>
      <div class="nav-thumb"></div>
    </div>

    <div class="side-pane comp-pane d-flex flex-column">
      <div class="comp-list">
        <div class="pane-strip"><span class="pane-x">✕</span></div>
        <div class="tab-strip d-flex"><div class="tab-on">构件列表</div><div class="tab-dim">图纸管理</div></div>
        <div class="comp-tools d-flex align-items-center">
          <span class="comp-tool"><svg class="ic"><use href="#i-new"/></svg>新建</span><span class="cr ms-2 me-3"></span>
          <span class="comp-tool me-3"><svg class="ic"><use href="#i-copy"/></svg>复制</span>
          <span class="comp-tool me-3"><svg class="ic"><use href="#i-del"/></svg>删除</span>
          <span class="comp-tool"><svg class="ic"><use href="#i-copy"/></svg>层间复制</span>
          <span class="comp-more">▸▸</span>
        </div>
        <div class="comp-search d-flex align-items-center justify-content-between"><span>搜索构件...</span><svg class="ic"><use href="#i-mag"/></svg></div>
        <div class="comp-item comp-item-a">KZ3  &lt;4&gt;</div>
        <div class="comp-item comp-item-b">TZ1  &lt;0&gt;</div>
        <div class="list-thumb"></div>
      </div>
      <div class="gap-strip"></div>
      <div class="pane-strip"><span class="pane-x">✕</span></div>
      <div class="tab-strip d-flex"><div class="tab-on">属性列表</div><div class="tab-dim">图层管理</div></div>
      <div class="prop-wrap">
        <div id="prop-rows"></div>
        <div class="prop-thumb"></div>
      </div>
      <div class="pane-foot"><button class="btn foot-btn" type="button">截面编辑</button></div>
    </div>

    <div class="handle"></div>

    <div class="draw-area">
      <svg width="1042" height="775" viewBox="0 0 1042 775">
        <path d="M0 222H88 M838 222H1001" stroke="#4f0d0d" stroke-width="1.500"/>
        <path d="M288 0V205 M288 295V742" stroke="#b02020" stroke-width="1.200"/>
        <polygon points="288,100 410,100 410,190 395,200 370,200 369,205 358,205 358,198 328,188 324,202 288,186" fill="#8a00ff"/>
        <circle cx="288" cy="15" r="14" fill="#000" stroke="#0d5a1a"/>
        <text x="288" y="22" fill="#f0d8d8" font-size="20" text-anchor="middle" font-family="Liberation Sans, sans-serif">3</text>
        <path d="M61 705V690" stroke="#00d020" stroke-width="3.500"/>
        <polygon points="61,675 67,691 55,691" fill="#00d020"/>
        <path d="M61 710V691" stroke="#00d020" stroke-width="3.500"/>
        <path d="M66 712H90" stroke="#f01010" stroke-width="5"/>
        <polygon points="100,712 87,705 87,719" fill="#f01010"/>
        <ellipse cx="61" cy="712" rx="7" ry="7" fill="#0000c8"/>
        <text x="61" y="673" fill="#00b428" font-size="16" text-anchor="middle" font-family="Liberation Sans, sans-serif">Y</text>
        <text x="107" y="718" fill="#d01010" font-size="17" text-anchor="middle" font-family="Liberation Sans, sans-serif">X</text>
      </svg>
      <div class="big-caption">梯柱的定义及绘制</div>
      <div class="view-tools">
        <svg viewBox="0 0 30 30"><circle cx="15" cy="15" r="10" stroke="#7f97ae"/><path d="M3 24C0 18 22 2 28 6 M28 6c3 5-20 22-25 18" stroke="#3f86c8"/></svg>
        <svg class="vt-m5" viewBox="0 0 30 30"><use href="#i-cube"/><text x="7" y="24" font-size="9" fill="#3f86c8" stroke="none" font-weight="700" font-family="Liberation Sans, sans-serif">3D</text></svg>
        <svg class="vt-m6" viewBox="0 0 30 30"><path d="M4 10l6-7h18l-5 7z" fill="#cfe3f7" stroke="#3f86c8"/><use href="#i-cube"/></svg>
        <span class="cr"></span>
        <svg class="vt-m7" viewBox="0 0 30 30"><path d="M4 10h19v18H4z M4 10l6-7h18l-5 7 M23 28l5-7V3" fill="#cfe3f7" stroke="#3f86c8" stroke-width="1.600"/></svg>
        <span class="cr"></span>
        <svg class="vt-m7" viewBox="0 0 30 30"><path d="M3 9V3h6 M21 3h6v6 M27 21v6h-6 M9 27H3v-6" stroke="#555"/></svg>
        <svg class="vt-m6" viewBox="0 0 30 30"><rect x="3" y="3" width="24" height="24" rx="2" stroke-dasharray="3 2"/><path d="M15 8l6 3.500v7L15 22l-6-3.500v-7z M9 11.500L15 15l6-3.500 M15 15v7" stroke="#3f86c8"/></svg>
        <div class="vt-rule"></div>
        <svg class="vt-m6" viewBox="0 0 30 30"><path d="M4 3h21v14 M4 3v24h12"/><path d="M8 9h12 M8 13h7 M8 17h4"/><ellipse cx="22" cy="23" rx="6" ry="4" stroke="#3f86c8"/><circle cx="22" cy="23" r="1.500" fill="#3f86c8" stroke="none"/></svg>
      </div>
      <div class="cmd-bar">
        <span class="cmd-line"></span>
        <span class="cmd-ring">3</span>
        <svg class="cmd-ico" viewBox="0 0 20 20"><path d="M2 18l7-7 M3 11h6v6 M11 9l7-7 M11 3v6h6"/></svg>
        <span class="cmd-text">按鼠标左键指定插入点,按右键结束或 ESC 取消</span>
      </div>
    </div>

    <div class="handle"></div>

    <div class="side-pane disp-pane d-flex flex-column">
      <div class="pane-strip"></div>
      <div class="disp-title">显示设置</div>
      <div class="disp-tabs d-flex"><div class="disp-tab">图元显示</div><div class="disp-tab-b">楼层显示</div></div>
      <div class="disp-grid">
        <div class="t-row t-head"><div class="t-name">图层构件</div><div class="t-show">显示图元</div></div>
        <div id="tree-rows"></div>
      </div>
      <div class="disp-foot"><button class="btn restore-btn" type="button">恢复默认</button></div>
    </div>
  </div>

  <!-- status bar -->
  <div class="status-bar d-flex align-items-center">
    <span class="st-a">标高：<span class="st-val">-0.05~3.55</span></span>
    <span class="st-b">选中图元：0</span>
    <span class="st-c">隐藏图元：0</span>
    <span class="snap"><svg viewBox="0 0 20 20"><path d="M5 3v13h11 M5 11h5v5"/></svg></span>
    <span class="snap snap-on"><svg viewBox="0 0 20 20"><rect x="3" y="4" width="14" height="14" rx="3"/><circle cx="4" cy="4" r="2"/></svg><span class="cr"></span></span>
    <span class="snap snap-gap"><svg viewBox="0 0 20 20"><path d="M3 2l14 16 M17 2L3 18"/><circle cx="10" cy="10" r="1.500" stroke="#3f86c8"/></svg></span>
    <span class="snap snap-w"><svg viewBox="0 0 20 20"><path d="M3 17L15 5 M3 17h14 M8 12l3 5"/></svg><span class="cr"></span></span>
    <span class="snap snap-w"><svg viewBox="0 0 20 20"><path d="M2 6h6 M5 3v6"/><rect x="6" y="12" width="12" height="4" fill="#555"/></svg><span class="cr"></span></span>
    <span class="snap"><svg viewBox="0 0 20 20"><rect x="3" y="2" width="13" height="16"/><rect x="5" y="4" width="8" height="9" fill="#666"/></svg></span>
    <span class="snap"><svg viewBox="0 0 20 20"><path d="M4 18Q4 7 15 3"/><path d="M12 11l5 4-5 3z" fill="#666"/></svg></span>
  </div>

  <!-- windows taskbar -->
  <div class="task-bar d-flex align-items-center">
    <div class="task-left">下降</div>
    <svg class="win-logo" viewBox="0 0 29 29"><rect width="14" height="14" fill="#2fb4ea"/><rect x="15" width="14" height="14" fill="#1f9fe0"/><rect y="15" width="14" height="14" fill="#1796d8"/><rect x="15" y="15" width="14" height="14" fill="#0a7fc8"/></svg>
    <div class="task-search d-flex align-items-center justify-content-center"><svg viewBox="0 0 20 20"><circle cx="11" cy="8" r="6"/><path d="M7 13l-4 5"/></svg>搜索</div>
    <svg class="task-view" viewBox="0 0 24 27"><rect x="8" y="0" width="16" height="20" fill="#f4f4f4"/><rect y="6" width="17" height="21" fill="#1f1f1f"/><rect x="8" y="6" width="12" height="14" fill="#9a9a9a"/></svg>
    <div class="tile tile-pink">
      <svg viewBox="0 0 32 32"><rect x="3" y="1" width="26" height="30" rx="6" fill="#1a7be8"/><path d="M9 9q6 1 8 6 3-4 6-6-1 10-7 15-6-5-7-15z" fill="#fff"/></svg>
      <span class="tile-dot tile-dot-red"></span>
    </div>
    <div class="tile">
      <svg viewBox="0 0 32 32"><path d="M3 3h12l2 3H3z" fill="#d8a92e"/><rect x="3" y="6" width="26" height="24" fill="#f7c93c"/><rect x="12" y="22" width="17" height="8" fill="#2b86c5"/></svg>
      <span class="tile-dot"></span>
    </div>
    <div class="tile">
      <svg viewBox="0 0 32 32"><path d="M2 4h9l5 12 5-12h9l-8 25h-6L16 20l-5 9H9z" fill="#dc3a2e"/></svg>
      <span class="tile-dot"></span>
    </div>
    <div class="tile">
      <svg viewBox="0 0 32 32"><path d="M29 19C29 9 23 2 15 2 7 2 2 9 2 16c0 9 7 15 14 15 4 0 8-1 10-4-7 3-14-1-14-7 0-3 3-5 6-5 4 0 6 2 6 4z" fill="#0f8fc4"/><path d="M29 19c-1-6-6-9-11-9-3 0-6 2-6 6 2-6 12-6 12 2z" fill="#5fc95a"/></svg>
      <span class="tile-dot"></span>
    </div>
    <div class="tile tile-soft">
      <svg viewBox="0 0 32 32"><rect x="4" y="1" width="24" height="30" rx="6" fill="#cfe6f7"/><path d="M9 8h14v4h-5v12q-2 3-4 0V12H9z" fill="#1e7fd0"/></svg>
      <span class="tile-dot tile-dot-blue"></span>
    </div>
    <div class="tray d-flex align-items-center">
      <svg class="tr-a" viewBox="0 0 20 24"><path d="M3 16l7-7 7 7"/></svg>
      <svg class="tr-b" viewBox="0 0 20 24"><ellipse cx="10" cy="14" rx="7" ry="9" fill="#222" stroke="none"/><ellipse cx="10" cy="16" rx="5" ry="6" fill="#f6e1c4" stroke="none"/><circle cx="6" cy="4" r="3" fill="#b5307c" stroke="none"/></svg>
      <svg class="tr-c" viewBox="0 0 20 24"><rect x="7" y="2" width="6" height="13" rx="3" stroke="#3c7fc2"/><path d="M4 11a6 6 0 0 0 12 0 M10 17v5" stroke="#3c7fc2"/></svg>
      <svg class="tr-d" viewBox="0 0 20 24"><path d="M2 22L10 2l8 20 M6 15h8 M7 22L10 9l3 13" stroke="#666"/></svg>
      <svg class="tr-e" viewBox="0 0 20 24"><path d="M3 4l14-2v18L3 22z" fill="#e8702a" stroke="none"/><path d="M14 7H7v5h6v5H6" stroke="#fff" stroke-width="2"/></svg>
      <svg class="tr-f" viewBox="0 0 20 24"><path d="M1 8q9-8 18 0 M4 12q6-5 12 0 M7 16q3-2 6 0"/><circle cx="10" cy="19" r="1.200" fill="#333"/></svg>
      <svg class="tr-g" viewBox="0 0 20 24"><path d="M3 10v5h3l5 4V6l-5 4z M14 8q3 4 0 8 M16 5q5 7 0 14"/></svg>
      <svg viewBox="0 0 20 24"><rect x="4" y="7" width="13" height="12" rx="1"/><rect x="2" y="5" width="6" height="8" fill="#222"/><path d="M4 2v3 M6 2v3"/></svg>
    </div>
  </div>
</div>

<script>
  // left pane: only the clipped right edge of each entry is on screen
  const navItems = [
    ['g', ''], ['g', ''], ['', 'J)'], ['', '轴线(O)'], ['g', ''], ['b', ''],
    ['', '柱(Z)'], ['', '柱(Z)'], ['', '边缘非..'], ['g', ''],
    ['', '墙(Q)'], ['', '门框墙('], ['', '墙(Q)'], ['', '加筋(Y)'], ['', '墙(Q)'],
    ['', 'A)'], ['', 'E)'], ['', 'Q)'], ['g', ''], ['g', '']
  ];
  document.getElementById('nav-rows').innerHTML = navItems.map(([kind, text]) => {
    const cls = kind === 'g' ? ' nav-grey' : kind === 'b' ? ' nav-blue' : '';
    return `<div class="nav-row${cls}">${text}</div>`;
  }).join('');

  // property table: [name, value, has checkbox, plain label]
  const props = [
    ['名称', 'TZ1', 0], ['结构类别', '框架柱', 1], ['定额类别', '普通柱', 1],
    ['截面宽度(B边)(...', '240', 1], ['截面高度(H边)(...', '240', 1], ['全部纵筋', '', 1],
    ['角筋', '4<span class="reb">中</span>14', 1], ['B边一侧中部筋', '', 1], ['H边一侧中部筋', '', 1],
    ['箍筋', '<span class="reb">中</span>8@150(2*2)', 1], ['节点区箍筋', '', 1], ['箍筋肢数', '2*2', 0],
    ['柱类型', '(中柱)', 1, 1], ['材质', '现浇混凝土', 1], ['混凝土类型', '(泵送砼(坍落度...', 1],
    ['混凝土强度等级', '(C30)', 1], ['混凝土外加剂', '(无)', 0], ['泵送类型', '(混凝土泵)', 0]
  ];
  let propHtml = '<div class="prop-row p-head"><div class="p-no"></div><div class="p-name">属性名称</div><div class="p-val">属性值</div><div class="p-add">附加</div></div>';
  props.forEach((p, i) => {
    const box = p[2] ? '<input class="form-check-input chk" type="checkbox">' : '';
    propHtml += `<div class="prop-row"><div class="p-no">${i + 1}</div><div class="p-name${p[3] ? ' p-plain' : ''}">${p[0]}</div><div class="p-val">${p[1]}</div><div class="p-add">${box}</div></div>`;
  });
  document.getElementById('prop-rows').innerHTML = propHtml;

  // display tree: [level, name, state] state: 0 off, 1 on, 2 partial
  const tree = [
    [0, '所有构件', 2], [1, '施工段', 2], [2, '土方工程', 0], [2, '基础工程', 0], [2, '主体结构', 1],
    [2, '二次结构', 0], [2, '装饰装修', 0], [2, '其它土建', 0], [2, '钢筋工程', 1], [1, '轴线', 1],
    [2, '轴网', 1], [2, '辅助轴线', 1], [1, '柱', 1], [2, '柱', 1], [2, '构造柱', 1], [2, '砌体柱', 1],
    [2, '约束边缘非阴...', 1], [1, '墙', 2], [2, '剪力墙', 1], [2, '人防门框墙', 1], [2, '砌体墙', 1],
    [2, '砌体加筋', 0], [2, '保温墙', 1], [2, '暗梁', 0]
  ];
  document.getElementById('tree-rows').innerHTML = tree.map(([lvl, name, st]) => {
    const toggle = lvl < 2 ? '<span class="t-btn"></span>' : '';
    const box = st === 2 ? '<span class="chk-part"></span>'
      : `<input class="form-check-input chk" type="checkbox"${st ? ' checked' : ''}>`;
    return `<div class="t-row"><div class="t-name t-l${lvl}">${toggle}${name}</div><div class="t-show">${box}</div></div>`;
  }).join('');
</script>
</body>
</html>
